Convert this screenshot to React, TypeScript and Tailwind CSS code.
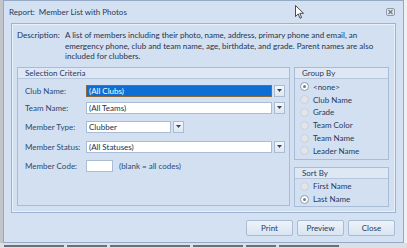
import React from "react";

const font = { fontFamily: "Lato, 'Open Sans', sans-serif" };

function DropBtn() {
  return (
    <div className="w-[11px] h-[12px] ml-[2px] border border-[#a9bcd4] bg-gradient-to-b from-[#f4f7fb] to-[#dde6f1] flex items-center justify-center">
      <svg width="5" height="3" viewBox="0 0 5 3"><path d="M0 0h5L2.5 3z" fill="#3a4656" /></svg>
    </div>
  );
}

function Combo({ w, text, selected }: { w: string; text: string; selected?: boolean }) {
  return (
    <div className="flex items-center">
      <div
        className={
          w +
          " h-[12px] flex items-center px-[2px] text-[8px] leading-none border " +
          (selected ? "bg-[#0d6fd3] text-white border-[#8a6a3a]" : "bg-white text-[#1c2f48] border-[#a9bcd4]")
        }
      >
        {text}
      </div>
      <DropBtn />
    </div>
  );
}

function Radio({ label, checked }: { label: string; checked?: boolean }) {
  return (
    <div className="flex items-center h-[12.8px]">
      <div
        className={
          "w-[9px] h-[9px] rounded-full flex items-center justify-center border " +
          (checked ? "border-[#8c9aab] bg-white" : "border-[#c8d0da] bg-[#e1e5ea]")
        }
      >
        {checked && <div className="w-[3px] h-[3px] rounded-full bg-[#6e7d8f]" />}
      </div>
      <span className="ml-[4px] text-[8px] text-[#1f3b5e] leading-none">{label}</span>
    </div>
  );
}

function Header({ text, h }: { text: string; h: string }) {
  return (
    <div className={h + " flex items-center pl-[7px] bg-[#dee8f5] border-b border-[#b6c8de] text-[8px] text-[#1f3b5e] leading-none"}>
      {text}
    </div>
  );
}

function Row({ label, children, mt }: { label: string; children: React.ReactNode; mt: string }) {
  return (
    <div className={"flex items-center " + mt}>
      <div className="w-[61px] text-[8px] text-[#2b4a72] leading-none">{label}</div>
      {children}
    </div>
  );
}

function Btn({ text }: { text: string }) {
  return (
    <div className="w-[47px] h-[16px] border border-[#a9bcd4] rounded-[2px] bg-gradient-to-b from-[#eef3f9] to-[#d9e4f1] flex items-center justify-center text-[8px] text-[#1f3b5e]">
      {text}
    </div>
  );
}

export default function App() {
  return (
    <div className="w-[407px] h-[248px] bg-[#c9ced4] flex flex-col overflow-hidden relative" style={font}>
      <div className="flex h-[243px]">
        <div className="w-[3px] bg-[#c2c6cb]" />
        <div className="w-[401px] h-[243px] border border-[#93a9c4] bg-[#d4e1f2] flex flex-col">
          <div className="h-[22px] flex items-center pl-[5px] pr-[8px]">
            <span className="text-[8px] text-[#1f3b5e] leading-none">Report:&nbsp; Member List with Photos</span>
            <div className="flex-1" />
            <svg width="9" height="8" viewBox="0 0 9 8">
              <rect x="0.5" y="0.5" width="8" height="7" rx="1.5" fill="#e3e9f1" stroke="#8f9aa8" />
              <path d="M2.5 2l4 4M6.5 2l-4 4" stroke="#6d7887" strokeWidth="1.2" />
            </svg>
          </div>
          <div className="ml-[7px] w-[385px] h-[190px] border border-[#9cb2ce] shadow-[inset_0_0_0_1px_#eaf0f8] bg-[#d3e0f1] flex flex-col pl-[5px] pr-[6px] pt-[6px]">
            <div className="flex text-[8px] leading-[10.5px] text-[#1f3350]">
              <div className="w-[48px] shrink-0">Description:</div>
              <div className="w-[330px] whitespace-nowrap">
                A list of members including their photo, name, address, primary phone and email, an
                <br />
                emergency phone, club and team name, age, birthdate, and grade. Parent names are also
                <br />
                included for clubbers.
              </div>
            </div>
            <div className="flex mt-[5px] gap-[4px]">
              <div className="w-[273px] h-[139px] border border-[#a8bcd6] flex flex-col">
                <Header text="Selection Criteria" h="h-[11px]" />
                <div className="pl-[7px] flex flex-col">
                  <Row label="Club Name:" mt="mt-[6px]">
                    <Combo w="w-[186px]" text="(All Clubs)" selected />
                  </Row>
                  <Row label="Team Name:" mt="mt-[5px]">
                    <Combo w="w-[186px]" text="(All Teams)" />
                  </Row>
                  <Row label="Member Type:" mt="mt-[7px]">
                    <Combo w="w-[85px]" text="Clubber" />
                  </Row>
                  <Row label="Member Status:" mt="mt-[8px]">
                    <Combo w="w-[186px]" text="(All Statuses)" />
                  </Row>
                  <Row label="Member Code:" mt="mt-[7px]">
                    <div className="flex items-center">
                      <div className="w-[27px] h-[12px] bg-white border border-[#a9bcd4]" />
                      <span className="ml-[6px] text-[8px] text-[#2b4a72] leading-none">(blank = all codes)</span>
                    </div>
                  </Row>
                </div>
              </div>
              <div className="flex flex-col w-[95px]">
                <div className="h-[93px] border border-[#a8bcd6] flex flex-col">
                  <Header text="Group By" h="h-[11px]" />
                  <div className="pl-[5px] pt-[2px] flex flex-col">
                    <Radio label="<none>" checked />
                    <Radio label="Club Name" />
                    <Radio label="Grade" />
                    <Radio label="Team Color" />
                    <Radio label="Team Name" />
                    <Radio label="Leader Name" />
                  </div>
                </div>
                <div className="mt-[7px] h-[40px] border border-[#a8bcd6] flex flex-col">
                  <Header text="Sort By" h="h-[12px]" />
                  <div className="pl-[5px] pt-[1px] flex flex-col">
                    <Radio label="First Name" />
                    <Radio label="Last Name" checked />
                  </div>
                </div>
              </div>
            </div>
          </div>
          <div className="flex justify-end gap-[4px] mt-[7px] pr-[8px]">
            <Btn text="Print" />
            <Btn text="Preview" />
            <Btn text="Close" />
          </div>
        </div>
        <div className="w-[3px] bg-[#eef0f2]" />
      </div>
      <div className="flex-1 bg-[#dcdfe3] flex items-center gap-[3px] px-[4px]">
        <div className="w-[60px] h-[2px] bg-[#6b6f75]" />
        <div className="w-[40px] h-[2px] bg-[#6b6f75]" />
        <div className="w-[80px] h-[2px] bg-[#6b6f75]" />
        <div className="w-[50px] h-[2px] bg-[#6b6f75]" />
        <div className="w-[30px] h-[2px] bg-[#6b6f75]" />
        <div className="w-[60px] h-[2px] bg-[#6b6f75]" />
      </div>
      <svg className="absolute left-[295px] top-[5px]" width="9" height="14" viewBox="0 0 9 14">
        <path d="M0.5 0.5v11l2.7-2.6 1.8 4.3 1.6-0.7-1.8-4.2h3.7z" fill="#fff" stroke="#222" strokeWidth="0.8" />
      </svg>
    </div>
  );
}
